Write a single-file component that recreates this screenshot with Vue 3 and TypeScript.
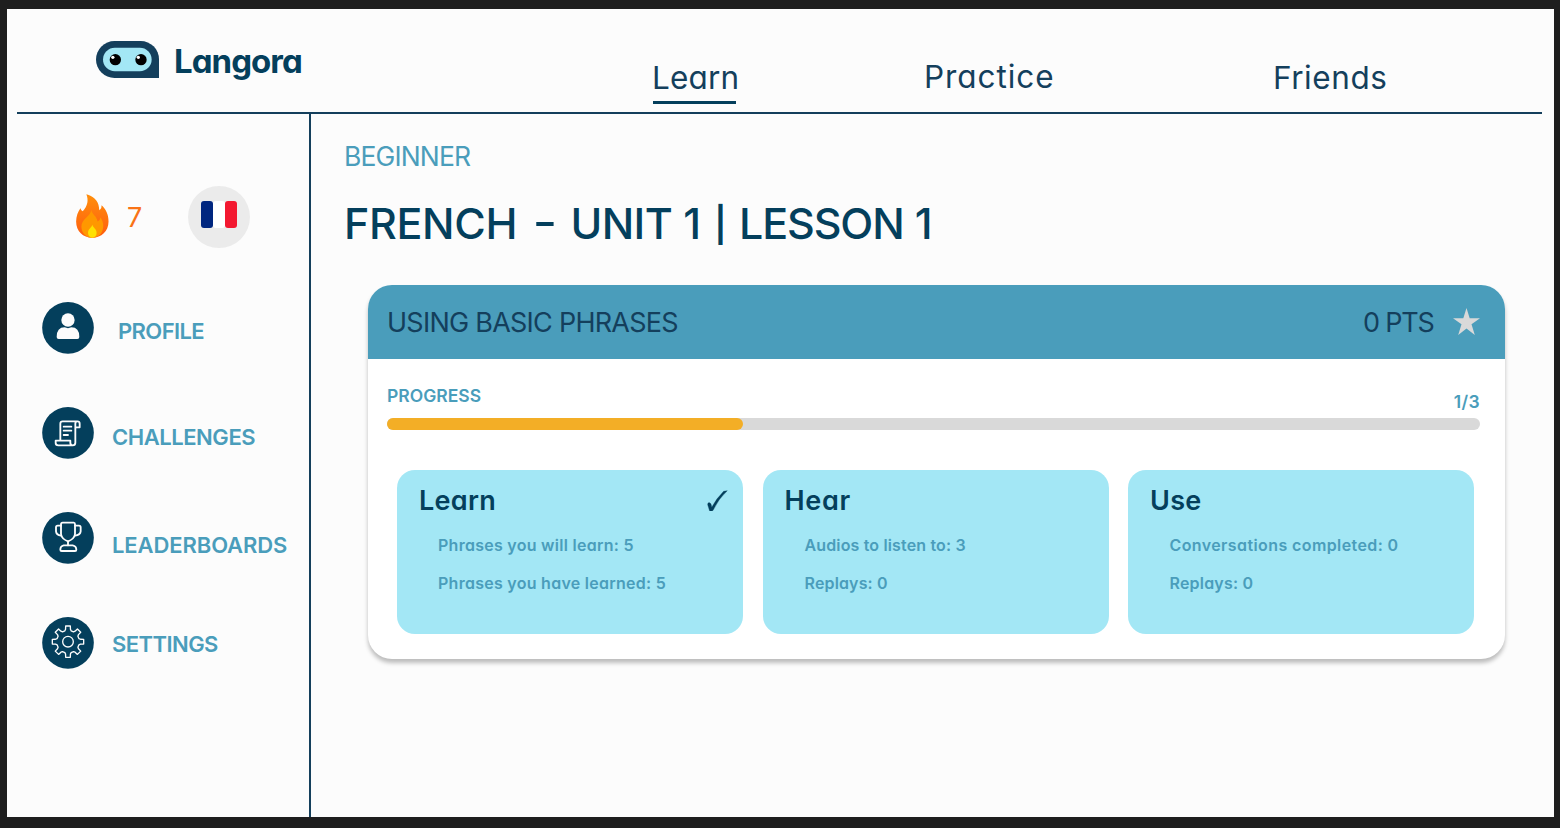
<script setup lang="ts">
interface NavLink { id: string; label: string; active?: boolean }
interface SideLink { id: string; label: string }
interface Activity { id: string; title: string; done?: boolean; lines: string[] }

const navLinks: NavLink[] = [
  { id: 'learn', label: 'Learn', active: true },
  { id: 'practice', label: 'Practice' },
  { id: 'friends', label: 'Friends' },
]
const sideLinks: SideLink[] = [
  { id: 'profile', label: 'PROFILE' },
  { id: 'challenges', label: 'CHALLENGES' },
  { id: 'leaderboards', label: 'LEADERBOARDS' },
  { id: 'settings', label: 'SETTINGS' },
]
const activities: Activity[] = [
  { id: 'a-learn', title: 'Learn', done: true, lines: ['Phrases you will learn: 5', 'Phrases you have learned: 5'] },
  { id: 'a-hear', title: 'Hear', lines: ['Audios to listen to: 3', 'Replays: 0'] },
  { id: 'a-use', title: 'Use', lines: ['Conversations completed: 0', 'Replays: 0'] },
]

// Outline of an eight-toothed cog centred on (cx, cy)
function cogPath(cx: number, cy: number): string {
  const pts: string[] = []
  for (let i = 0; i < 8; i++) {
    for (const [r, off] of [[34, -16], [38, -11], [47.5, -8.5], [47.5, 8.5], [38, 11], [34, 16]]) {
      const a = ((i * 45 + off) * Math.PI) / 180
      pts.push(`${(cx + r * Math.sin(a)).toFixed(1)} ${(cy - r * Math.cos(a)).toFixed(1)}`)
    }
  }
  return `M${pts.join('L')}Z`
}
const cog = cogPath(114, 425)
</script>

<template>
  <div class="window">
    <div class="page">
      <header class="topbar">
        <div class="brand">
          <svg class="logo" viewBox="48 47 189 111">
            <path d="M103.500 47H182A55 55 0 0 1 237 102V158H103.500A55.500 55.500 0 0 1 103.500 47Z" fill="#143f5c" />
            <rect x="69" y="67" width="146" height="71" rx="35.500" fill="#a3e7f5" />
            <circle cx="106" cy="103" r="17" /><circle cx="183" cy="103" r="17" />
            <circle cx="98.500" cy="96" r="5" fill="#fff" /><circle cx="175" cy="96" r="5" fill="#fff" />
          </svg>
          <span class="wordmark">Langora</span>
        </div>
        <nav class="nav">
          <a v-for="n in navLinks" :key="n.id" class="nav-link" :class="[n.id, { active: n.active }]">{{ n.label }}</a>
        </nav>
      </header>

      <div class="body">
        <aside class="sidebar">
          <div class="status">
            <svg class="flame" viewBox="49 55 99 133">
              <defs>
                <linearGradient id="fire" x1="0" y1="0" x2="0" y2="1"><stop offset="0" stop-color="#ff8f0c" /><stop offset="1" stop-color="#ff5c0f" /></linearGradient>
              </defs>
              <path d="M80 56C99 60 116 75 118 95Q118 101 120 104Q127 99 126 89C139 101 147 117 147 138C147 168 125 187 98 187C70 187 49 168 49 138C49 122 55 108 62 98Q64 105 69 107C84 91 87 75 80 56Z" fill="url(#fire)" />
              <path d="M95 103C98 118 111 120 114 138Q122 135 122 126C129 134 131 143 131 151C131 173 117 187 98 187C78 187 65 172 65 153C65 130 91 124 95 103Z" fill="#ff9800" />
              <path d="M98 148C100 157 111 161 111 172C111 181 106 187 98 187C90 187 85 181 85 172C85 161 96 157 98 148Z" fill="#ffe100" />
            </svg>
            <span class="streak">7</span>
            <span class="flag"><i class="blue"></i><i class="white"></i><i class="red"></i></span>
          </div>
          <ul class="side-nav">
            <li v-for="s in sideLinks" :key="s.id" class="side-item" :class="s.id">
              <svg v-if="s.id === 'profile'" class="badge" viewBox="36 36 156 156">
                <circle cx="114" cy="113.500" r="77.500" fill="#043f5c" />
                <circle cx="114" cy="90" r="20" fill="#fcfcfc" />
                <path d="M80 141Q80 112 104 112Q114 117 124 112Q148 112 148 141Q148 147 142 147H86Q80 147 80 141Z" fill="#fcfcfc" />
              </svg>
              <svg v-else-if="s.id === 'challenges'" class="badge" viewBox="36 351 156 156">
                <circle cx="114" cy="428.500" r="77.500" fill="#043f5c" />
                <g class="line">
                  <path d="M91 452V401Q91 394 98 394H142Q149 394 149 401V412H136V458Q136 466 128 466H85Q77 466 77 459V452H121V458Q121 465 128 466M136 412V401Q136 394 142 394" />
                  <path d="M101 410H124M101 422H124M101 435H114" />
                </g>
              </svg>
              <svg v-else-if="s.id === 'leaderboards'" class="badge" viewBox="36 36 156 156">
                <circle cx="114" cy="113.500" r="77.500" fill="#043f5c" />
                <g class="line">
                  <path d="M98 68H131Q135 68 135 73V102Q133 117 114 124Q95 117 93 102V73Q93 68 98 68Z" />
                  <path d="M93 77H83Q78 77 78 82V94Q79 105 93 107M135 77H147Q152 77 152 82V94Q151 105 135 107M114 124V136" />
                  <path d="M101 136H128Q139 138 139 149Q139 153 135 153H95Q91 153 91 149Q91 138 101 136Z" />
                </g>
              </svg>
              <svg v-else class="badge" viewBox="36 351 156 156">
                <circle cx="114" cy="428.500" r="77.500" fill="#043f5c" />
                <g class="line thin"><path :d="cog" /><circle cx="114" cy="425" r="16" /></g>
              </svg>
              <span class="side-label">{{ s.label }}</span>
            </li>
          </ul>
        </aside>

        <main class="content">
          <p class="level">BEGINNER</p>
          <h1 class="title"><span>FRENCH</span> <span class="dash">-</span> <span class="unit">UNIT</span> <span>1</span> <span class="bar">|</span> <span class="lesson">LESSON</span> <span>1</span></h1>
          <section class="card">
            <div class="card-head">
              <span class="card-title">USING BASIC PHRASES</span>
              <span class="points">0 PTS</span>
              <svg class="star" viewBox="0 0 27 27"><path d="M13.500 0L16.700 10.200H27L18.500 16.300L21.800 27L13.500 20.600L5.200 27L8.500 16.300L0 10.200H10.300Z" fill="#d9d9d9" /></svg>
            </div>
            <div class="card-body">
              <div class="progress-row"><span class="progress-label">PROGRESS</span><span class="progress-count">1/3</span></div>
              <div class="track"><div class="fill"></div></div>
              <div class="activities">
                <article v-for="a in activities" :key="a.id" class="activity" :class="a.id">
                  <h2 class="activity-title">{{ a.title }}</h2>
                  <svg v-if="a.done" class="check" viewBox="1057 119 63 65"><path d="M1118 121L1107 123Q1085 145 1071 171Q1070 158 1063 157Q1058 158 1059 164Q1062 172 1064 181Q1066 184 1070 183Q1074 183 1076 179Q1092 145 1118 121Z" fill="#043f5c" stroke="#043f5c" /></svg>
                  <p v-for="(l, i) in a.lines" :key="l" class="activity-line" :class="'l' + i">{{ l }}</p>
                </article>
              </div>
            </div>
          </section>
        </main>
      </div>
    </div>
  </div>
</template>

<style>
html, body { margin: 0; background: #1e1e1e; }
</style>

<style scoped>
* { box-sizing: border-box; }
h1, h2, p, ul { margin: 0; padding: 0; list-style: none; }
.window { height: 828px; padding: 9px 6px 11px 7px; background: #1e1e1e; overflow: hidden; font-family: Inter, "Liberation Sans", sans-serif; font-feature-settings: "cv11"; color: #043f5c; white-space: nowrap; }
.page { height: 808px; background: #fcfcfc; overflow: hidden; }
.topbar { display: flex; height: 105px; margin: 0 12px 0 10px; border-bottom: 2px solid #143f5c; }
.brand { display: flex; width: 635px; padding-left: 79px; }
.logo { width: 63px; height: 37px; margin-top: 31.500px; }
.wordmark { margin: 32px 0 0 15px; line-height: 40px; font-size: 33px; font-weight: 700; letter-spacing: -0.950px; }
.nav { display: flex; }
.nav-link { height: 40px; margin-top: 49px; line-height: 40px; font-size: 31.500px; letter-spacing: 0.200px; color: #143f5c; }
.nav-link.learn { width: 272px; }
.nav-link.practice { width: 349px; margin-top: 48px; letter-spacing: 0.950px; }
.nav-link.friends { letter-spacing: 0.550px; }
.nav-link.active::after { content: ""; display: block; width: 83px; height: 3.500px; margin: 2.500px 0 0 1px; background: #043f5c; }
.body { display: flex; height: 703px; }
.sidebar { width: 304px; padding-top: 72px; border-right: 2px solid #143f5c; }
.status { display: flex; height: 62px; align-items: center; padding-left: 69px; }
.flame { width: 33px; height: 44px; margin-bottom: 3px; }
.streak { width: 61px; margin-left: 18px; font-size: 27px; color: #f97316; }
.flag { display: flex; width: 62px; height: 62px; align-items: center; justify-content: center; border-radius: 50%; background: #ebebeb; padding-bottom: 5px; }
.flag i { width: 12px; height: 27px; border-radius: 3px; }
.flag .blue { background: #00267f; }
.flag .white { background: #fff; }
.flag .red { background: #f31830; }
.side-nav { margin-top: 54px; padding-left: 35px; }
.side-item { display: flex; height: 52px; margin-bottom: 53px; }
.badge { width: 52px; height: 52px; }
.line { fill: none; stroke: #fcfcfc; stroke-width: 5.500; stroke-linejoin: round; stroke-linecap: round; }
.thin { stroke-width: 4; }
.side-label { margin-left: 18px; line-height: 52px; font-size: 22px; font-weight: 600; color: #4a9dbb; }
.profile .side-label { margin: 3px 0 0 24px; letter-spacing: -0.600px; }
.challenges .side-label { margin-top: 4px; letter-spacing: -0.450px; }
.leaderboards .side-label { margin-top: 7px; letter-spacing: -0.100px; }
.settings .side-label { margin-top: 1px; letter-spacing: -0.550px; }
.content { width: 1243px; padding: 22px 49px 0 33px; }
.level { height: 40px; line-height: 40px; font-size: 26.500px; letter-spacing: -0.850px; color: #4a9dbb; }
.title { height: 60px; margin-top: 17px; line-height: 60px; font-size: 43px; font-weight: 500; letter-spacing: -0.350px; }
.title span { display: inline-block; }
.title .dash { margin: 0 5px 0 6.500px; transform: translateY(-2px) scaleX(1.250); }
.title .unit { letter-spacing: -0.600px; }
.title .bar { margin: 0 0.400px 0 1px; transform: translateY(1px) scaleY(0.800); }
.title .lesson { letter-spacing: -1.100px; }
.card { width: 1137.500px; height: 374px; margin: 32px 0 0 23.500px; border-radius: 24px; background: #fff; box-shadow: 0 4px 4px rgba(0, 0, 0, 0.25); }
.card-head { display: flex; height: 74px; align-items: center; padding: 0 25px 0 19.500px; border-radius: 24px 24px 0 0; background: #4a9dbb; color: #143f5c; font-size: 27px; }
.card-title { margin-right: auto; letter-spacing: -0.750px; }
.points { width: 90px; letter-spacing: -1.200px; }
.star { width: 27px; height: 27px; margin-bottom: 2px; }
.card-body { padding: 26px 25px 0 19.500px; }
.progress-row { display: flex; justify-content: space-between; height: 33px; line-height: 22px; font-size: 17.500px; font-weight: 600; color: #4a9dbb; }
.progress-count { margin-top: 6px; letter-spacing: 0.400px; }
.track { height: 11.500px; border-radius: 6px; background: #d9d9d9; }
.fill { width: 356px; height: 11.500px; border-radius: 6px; background: #f3ae26; }
.activities { display: flex; gap: 19.500px; padding: 40px 0 0 10px; }
.activity { position: relative; width: 346px; height: 164px; padding: 15px 0 0 22px; border-radius: 18px; background: #a3e7f5; }
.activity-title { line-height: 32px; font-size: 27px; font-weight: 600; letter-spacing: 0.300px; }
.a-hear .activity-title { letter-spacing: 0.700px; }
.check { position: absolute; top: 20px; left: 310px; width: 21px; height: 21.500px; }
.activity-line { height: 37.500px; padding-left: 19px; line-height: 24px; font-size: 16px; font-weight: 600; letter-spacing: 0.270px; color: #4a9dbb; }
.activity-line.l0 { margin-top: 16px; }
.activity-line.l1 { padding-top: 0.500px; }
.a-hear .activity-line { padding-left: 20px; letter-spacing: 0.150px; }
.a-use .activity-line { padding-left: 19.500px; letter-spacing: 0.400px; }
.a-use .activity-line.l1 { letter-spacing: 0.200px; }
</style>
